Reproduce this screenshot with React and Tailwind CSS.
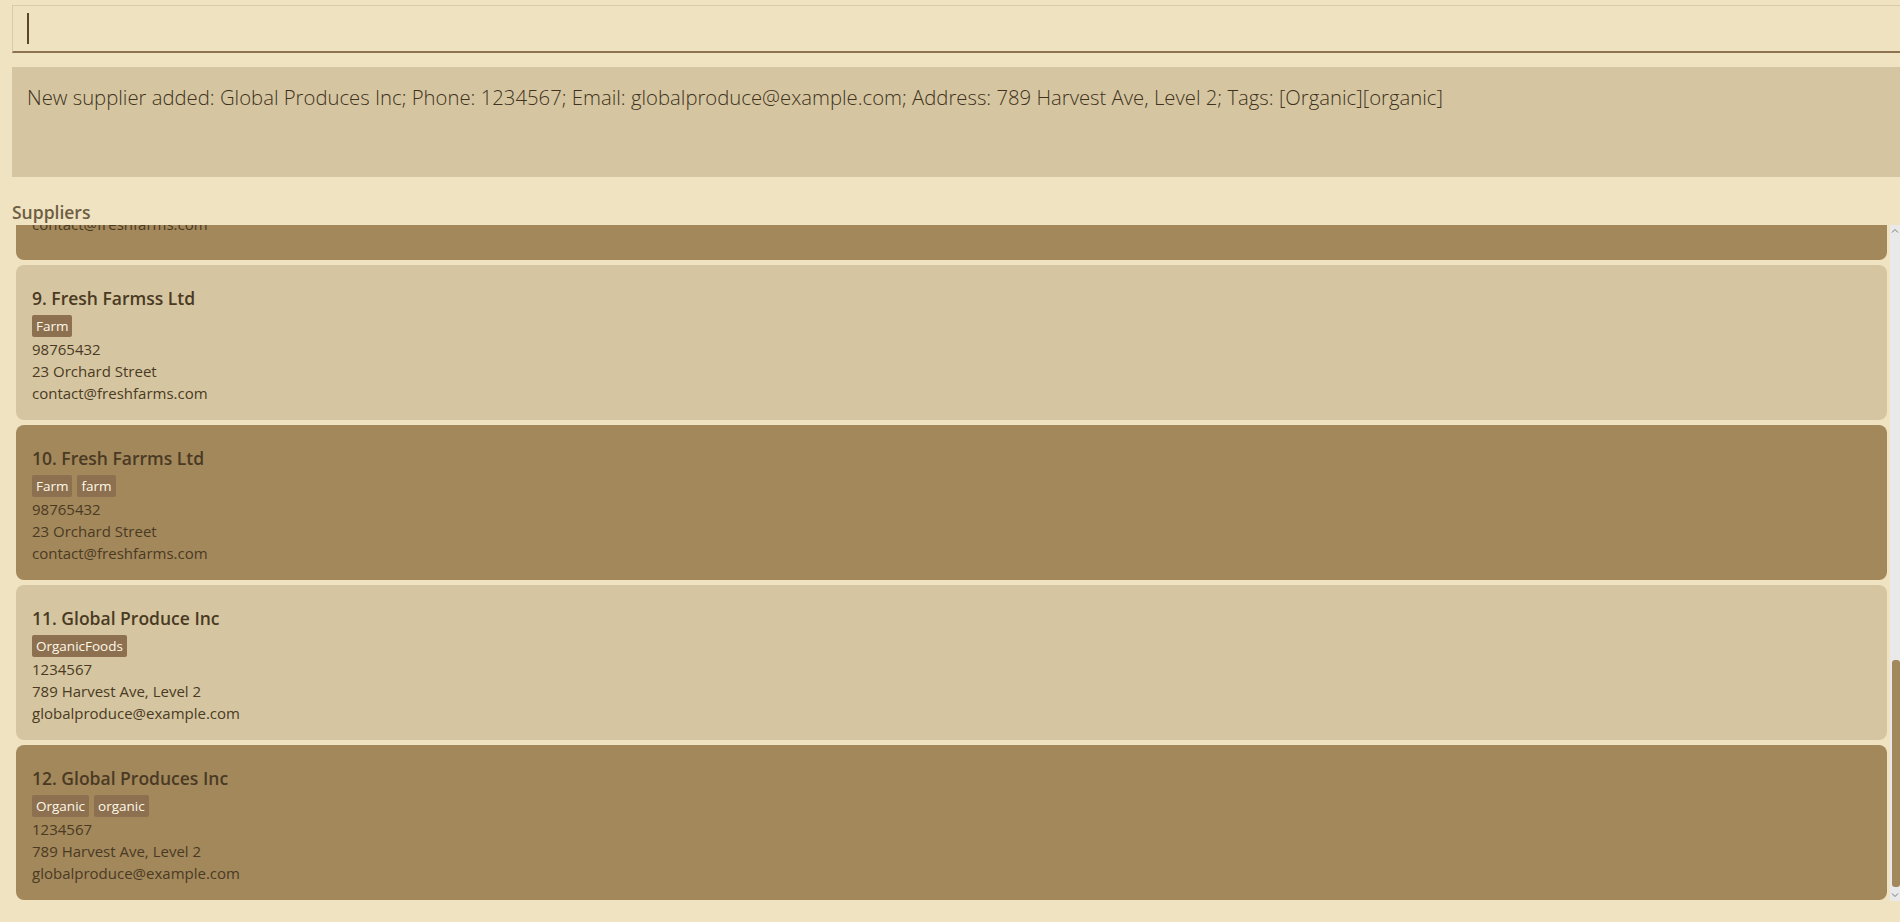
import React from 'react';

const suppliers = [
  { n: 8, name: 'Fresh Farms Ltd', tags: ['Farm'], phone: '98765432', addr: '23 Orchard Street', email: 'contact@freshfarms.com', extra: true },
  { n: 9, name: 'Fresh Farmss Ltd', tags: ['Farm'], phone: '98765432', addr: '23 Orchard Street', email: 'contact@freshfarms.com' },
  { n: 10, name: 'Fresh Farrms Ltd', tags: ['Farm', 'farm'], phone: '98765432', addr: '23 Orchard Street', email: 'contact@freshfarms.com' },
  { n: 11, name: 'Global Produce Inc', tags: ['OrganicFoods'], phone: '1234567', addr: '789 Harvest Ave, Level 2', email: 'globalproduce@example.com' },
  { n: 12, name: 'Global Produces Inc', tags: ['Organic', 'organic'], phone: '1234567', addr: '789 Harvest Ave, Level 2', email: 'globalproduce@example.com' },
];

function Card({ s, dark }) {
  return (
    <div
      className={
        'rounded-[8px] pl-4 pt-[21px] ' +
        (s.extra ? 'pb-[25px] ' : 'pb-4 ') +
        (dark ? 'bg-[#a3885c]' : 'bg-[#d5c6a1]')
      }
    >
      <div className="text-[17.5px] leading-6 font-semibold text-[#4a3a23]">
        {s.n}. {s.name}
      </div>
      <div className="flex gap-[5px] mt-[5px] mb-px">
        {s.tags.map((t) => (
          <span
            key={t}
            className="h-[22px] leading-[22px] px-[4px] rounded-[2px] bg-[#8c7050] text-[#fff8e6] text-[13.5px] font-medium"
          >
            {t}
          </span>
        ))}
      </div>
      <div className="text-[15px] leading-[22px] text-[#4a3a23]">
        <div>{s.phone}</div>
        <div>{s.addr}</div>
        <div>{s.email}</div>
      </div>
    </div>
  );
}

export default function App() {
  return (
    <div
      className="h-[922px] w-full overflow-hidden bg-[#f0e3c1] flex flex-col"
      style={{ fontFamily: '"Open Sans", "Noto Sans", sans-serif' }}
    >
      <div className="pl-3 pt-[5px]">
        <div className="h-[48px] border-t border-l border-[#d8cba6] border-b-2 border-b-[#8e7350] bg-[#efe2c0] flex items-center pl-[14px]">
          <div className="w-[2px] h-[31px] bg-[#5a4628]" />
        </div>
      </div>

      <div className="pl-3 mt-[14px]">
        <div className="h-[110px] bg-[#d5c6a1] pl-[15px] pt-[18px] text-[20.3px] font-light text-[#3f3220] leading-6">
          New supplier added: Global Produces Inc; Phone: 1234567; Email: globalproduce@example.com; Address: 789 Harvest Ave, Level 2; Tags: [Organic][organic]
        </div>
      </div>

      <div className="pl-3 mt-[23px] h-[24px] leading-[24px] text-[17.5px] font-semibold text-[#6e5d43]">
        Suppliers
      </div>

      <div className="pl-4 flex h-[676px] mt-px">
        <div className="flex-1 overflow-hidden">
          <div className="flex flex-col gap-[5px] -mt-[129px]">
            {suppliers.map((s) => (
              <Card key={s.n} s={s} dark={s.n % 2 === 0} />
            ))}
          </div>
        </div>
        <div className="w-[3px]" />
        <div className="w-[10px] bg-[#e9e9e9] flex flex-col items-center">
          <svg width="8" height="8" viewBox="0 0 8 8" className="mt-[2px]">
            <path d="M1 5.5 L4 2.5 L7 5.5" fill="none" stroke="#777" strokeWidth="1" />
          </svg>
          <div className="flex-1 w-full flex flex-col justify-end">
            <div className="ml-[2px] w-[8px] h-[227px] rounded-[3px] bg-[#a3885c]" />
          </div>
          <svg width="8" height="8" viewBox="0 0 8 8" className="mt-[4px] mb-[2px]">
            <path d="M1 2.5 L4 5.5 L7 2.5" fill="none" stroke="#777" strokeWidth="1" />
          </svg>
        </div>
      </div>
    </div>
  );
}
